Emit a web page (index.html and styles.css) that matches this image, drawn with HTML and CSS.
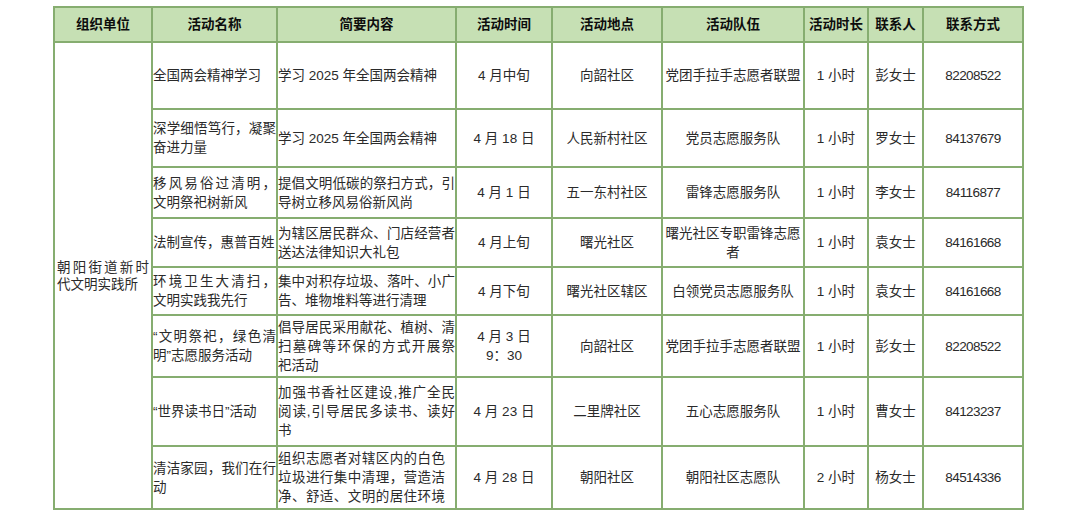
FILE: index.html
```html
<!DOCTYPE html>
<html lang="zh-CN">
<head>
<meta charset="utf-8">
<title>活动安排</title>
<link rel="stylesheet" href="styles.css">
</head>
<body>
<div class="page">
<table class="sched">
  <colgroup>
    <col class="c-org"><col class="c-name"><col class="c-desc"><col class="c-time"><col class="c-place"><col class="c-team"><col class="c-dur"><col class="c-person"><col class="c-phone">
  </colgroup>
  <thead>
    <tr class="r-head">
      <th>组织单位</th><th>活动名称</th><th>简要内容</th><th>活动时间</th><th>活动地点</th><th>活动队伍</th><th>活动时长</th><th>联系人</th><th>联系方式</th>
    </tr>
  </thead>
  <tbody>
    <tr class="r1">
      <td class="org" rowspan="8"><span class="ln">朝阳街道新时</span>代文明实践所</td>
      <td class="txt">全国两会精神学习</td>
      <td class="txt">学习 2025 年全国两会精神</td>
      <td>4 月中旬</td><td>向韶社区</td><td>党团手拉手志愿者联盟</td><td>1 小时</td><td>彭女士</td><td class="num">82208522</td>
    </tr>
    <tr class="r2">
      <td class="txt"><span class="ln">深学细悟笃行，凝聚</span>奋进力量</td>
      <td class="txt">学习 2025 年全国两会精神</td>
      <td>4 月 18 日</td><td>人民新村社区</td><td>党员志愿服务队</td><td>1 小时</td><td>罗女士</td><td class="num">84137679</td>
    </tr>
    <tr class="r3">
      <td class="txt"><span class="ln">移风易俗过清明，</span>文明祭祀树新风</td>
      <td class="txt"><span class="ln">提倡文明低碳的祭扫方式，引</span>导树立移风易俗新风尚</td>
      <td>4 月 1 日</td><td>五一东村社区</td><td>雷锋志愿服务队</td><td>1 小时</td><td>李女士</td><td class="num">84116877</td>
    </tr>
    <tr class="r4">
      <td class="txt">法制宣传，惠普百姓</td>
      <td class="txt"><span class="ln">为辖区居民群众、门店经营者</span>送达法律知识大礼包</td>
      <td>4 月上旬</td><td>曙光社区</td><td>曙光社区专职雷锋志愿者</td><td>1 小时</td><td>袁女士</td><td class="num">84161668</td>
    </tr>
    <tr class="r5">
      <td class="txt"><span class="ln">环境卫生大清扫，</span>文明实践我先行</td>
      <td class="txt"><span class="ln">集中对积存垃圾、落叶、小广</span>告、堆物堆料等进行清理</td>
      <td>4 月下旬</td><td>曙光社区辖区</td><td>白领党员志愿服务队</td><td>1 小时</td><td>袁女士</td><td class="num">84161668</td>
    </tr>
    <tr class="r6">
      <td class="txt"><span class="ln">“文明祭祀，绿色清</span>明”志愿服务活动</td>
      <td class="txt"><span class="ln">倡导居民采用献花、植树、清</span><span class="ln">扫墓碑等环保的方式开展祭</span>祀活动</td>
      <td>4 月 3 日<br>9：30</td><td>向韶社区</td><td>党团手拉手志愿者联盟</td><td>1 小时</td><td>彭女士</td><td class="num">82208522</td>
    </tr>
    <tr class="r7">
      <td class="txt">“世界读书日”活动</td>
      <td class="txt"><span class="ln">加强书香社区建设,推广全民</span><span class="ln">阅读,引导居民多读书、读好</span>书</td>
      <td>4 月 23 日</td><td>二里牌社区</td><td>五心志愿服务队</td><td>1 小时</td><td>曹女士</td><td class="num">84123237</td>
    </tr>
    <tr class="r8">
      <td class="txt"><span class="ln">清洁家园，我们在行</span>动</td>
      <td class="txt wide"><span class="ln">组织志愿者对辖区内的白色</span><span class="ln">垃圾进行集中清理，营造洁</span><span class="ln">净、舒适、文明的居住环境</span></td>
      <td>4 月 28 日</td><td>朝阳社区</td><td>朝阳社区志愿队</td><td>2 小时</td><td>杨女士</td><td class="num">84514336</td>
    </tr>
  </tbody>
</table>
</div>
</body>
</html>
```

FILE: styles.css
```css
html, body {
  margin: 0;
  padding: 0;
  background: #ffffff;
}

.page {
  padding: 6px 0 0 53px;
}

.sched {
  border-collapse: collapse;
  table-layout: fixed;
  width: 971px;
  font-family: "Liberation Sans", "Noto Sans CJK SC", sans-serif;
  font-size: 13.5px;
  color: #2a2a2a;
}

.c-org { width: 98px; }
.c-name { width: 125px; }
.c-desc { width: 179px; }
.c-time { width: 96px; }
.c-place { width: 110px; }
.c-team { width: 142px; }
.c-dur { width: 64px; }
.c-person { width: 55px; }
.c-phone { width: 100px; }

.sched th,
.sched td {
  border: 2px solid #86ad70;
  padding: 0 1px;
  text-align: center;
  vertical-align: middle;
  line-height: 19px;
  overflow: hidden;
}

.sched th {
  background: #c6e0b4;
  color: #0d0d0d;
  font-weight: bold;
  font-size: 13.5px;
}

.sched td.txt {
  text-align: left;
  padding: 0;
  white-space: nowrap;
}

.sched td.org {
  text-align: left;
  line-height: 17px;
  padding: 0 2px;
  white-space: nowrap;
}

.ln {
  display: block;
  text-align: justify;
  text-align-last: justify;
}

.sched td.wide {
  padding-right: 10px;
}

.sched td.num {
  letter-spacing: -0.6px;
}

.r-head th { height: 33px; }
.r1 td { height: 65px; }
.r2 td { height: 56px; }
.r3 td { height: 49px; }
.r4 td { height: 47px; }
.r5 td { height: 46px; }
.r6 td { height: 60px; }
.r7 td { height: 67px; }
.r8 td { height: 61px; }
```
